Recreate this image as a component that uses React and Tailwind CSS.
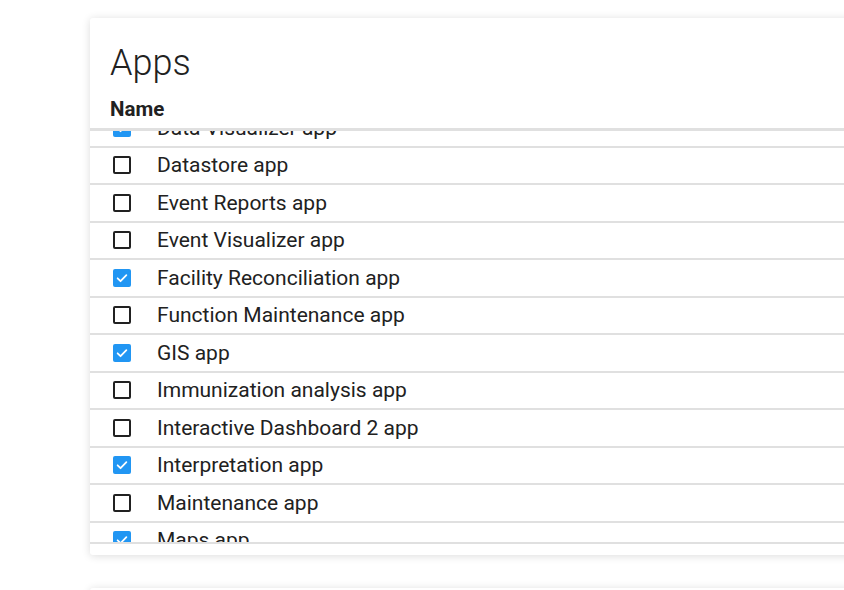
import React, { useEffect, useRef } from 'react';

const apps = [
  { name: 'Data Visualizer app', checked: true },
  { name: 'Datastore app', checked: false },
  { name: 'Event Reports app', checked: false },
  { name: 'Event Visualizer app', checked: false },
  { name: 'Facility Reconciliation app', checked: true },
  { name: 'Function Maintenance app', checked: false },
  { name: 'GIS app', checked: true },
  { name: 'Immunization analysis app', checked: false },
  { name: 'Interactive Dashboard 2 app', checked: false },
  { name: 'Interpretation app', checked: true },
  { name: 'Maintenance app', checked: false },
  { name: 'Maps app', checked: true },
];

function Checkbox({ checked }) {
  if (checked) {
    return (
      <span className="flex h-[18px] w-[18px] shrink-0 items-center justify-center rounded-[2px] bg-[#2196f3]">
        <svg width="14" height="14" viewBox="0 0 24 24" fill="none">
          <path d="M4.5 12.5l5 5L19.5 7" stroke="#fff" strokeWidth="3" strokeLinecap="round" strokeLinejoin="round" />
        </svg>
      </span>
    );
  }
  return <span className="h-[18px] w-[18px] shrink-0 rounded-[2px] border-2 border-[#212121]" />;
}

export default function App() {
  const listRef = useRef(null);

  // list is scrolled down a little, first row is half hidden under the header
  useEffect(() => {
    if (listRef.current) listRef.current.scrollTop = 21;
  }, []);

  return (
    <div className="h-[590px] w-[844px] overflow-hidden bg-white" style={{ fontFamily: 'Roboto, "Noto Sans", sans-serif' }}>
      <div className="ml-[90px] mt-[18px] w-[800px] rounded-[3px] bg-white shadow-[0_1px_8px_rgba(0,0,0,0.14)]">
        <div className="border-b-[3px] border-[#e0e0e0] pl-[20px] pt-[23px] pb-[7px]">
          <h1 className="text-[36px] font-light leading-[44px] text-[#212121]">Apps</h1>
          <div className="mt-[12px] text-[20.5px] font-bold leading-[24px] text-[#212121]">Name</div>
        </div>

        <div ref={listRef} className="h-[411px] overflow-hidden">
          {apps.map((app) => (
            <div key={app.name} className="flex h-[37.5px] items-center border-b-2 border-[#e0e0e0] pl-[23px]">
              <Checkbox checked={app.checked} />
              <span className="ml-[26px] text-[21px] leading-[24px] text-[#212121]">{app.name}</span>
            </div>
          ))}
        </div>

        <div className="h-[13px] border-t-2 border-[#e0e0e0]" />
      </div>

      <div className="ml-[90px] mt-[33px] h-[100px] w-[800px] rounded-[3px] bg-white shadow-[0_1px_8px_rgba(0,0,0,0.14)]" />
    </div>
  );
}
